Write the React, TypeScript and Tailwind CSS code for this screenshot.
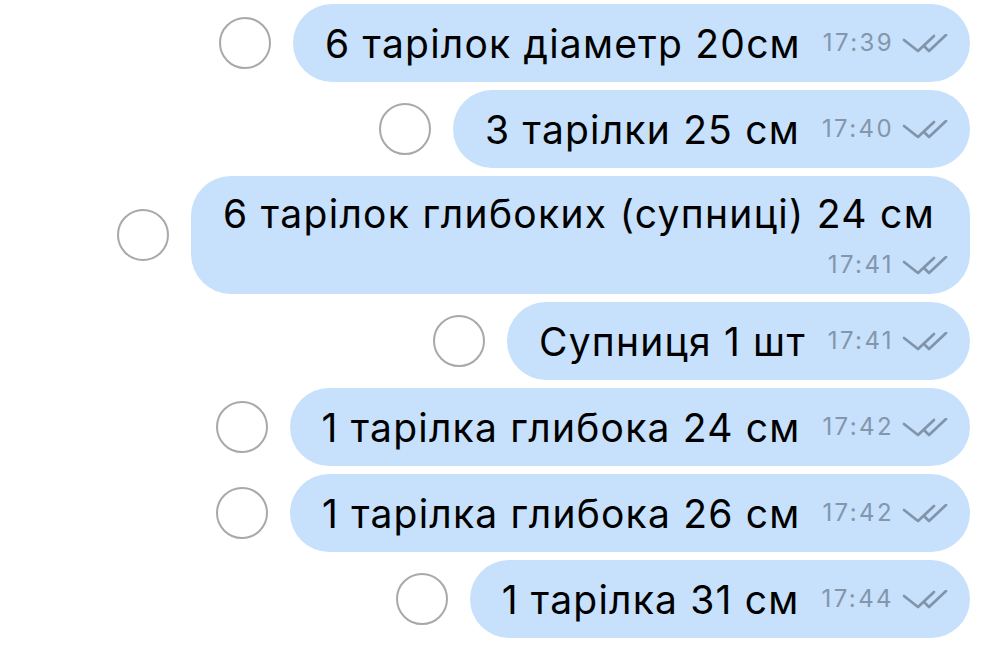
import React from 'react';

type Msg = { text: string; time: string; wrap?: boolean };

const messages: Msg[] = [
  { text: '6 тарілок діаметр 20см', time: '17:39' },
  { text: '3 тарілки 25 см', time: '17:40' },
  { text: '6 тарілок глибоких (супниці) 24 см', time: '17:41', wrap: true },
  { text: 'Супниця 1 шт', time: '17:41' },
  { text: '1 тарілка глибока 24 см', time: '17:42' },
  { text: '1 тарілка глибока 26 см', time: '17:42' },
  { text: '1 тарілка 31 см', time: '17:44' },
];

const Checks: React.FC = () => (
  <svg width="46" height="19" viewBox="0 0 46 19" fill="none" className="shrink-0">
    <path d="M2 6 L16 17 L32 2" stroke="#8194a9" strokeWidth="2.7" strokeLinecap="round" strokeLinejoin="round" />
    <path d="M22 12 L27 17 L44 1" stroke="#8194a9" strokeWidth="2.7" strokeLinecap="round" strokeLinejoin="round" />
  </svg>
);

const Meta: React.FC<{ time: string }> = ({ time }) => (
  <div className="flex items-center gap-2 shrink-0">
    <span className="text-[24px] leading-none text-[#8396ab] tracking-[2.4px]">{time}</span>
    <Checks />
  </div>
);

const Row: React.FC<{ msg: Msg }> = ({ msg }) => (
  <div className="flex items-center justify-end gap-[22px]">
    <div className="w-[52px] h-[52px] rounded-full border-2 border-[#a9a9a9] shrink-0" />
    {msg.wrap ? (
      <div className="bg-[#c7e0fb] rounded-[40px] h-[118px] pl-8 pr-[22px] pt-[14px] flex flex-col">
        <span className="text-[39px] leading-[48px] tracking-[1.3px] text-black whitespace-nowrap mr-[13px]">{msg.text}</span>
        <div className="flex justify-end mt-[15px]">
          <Meta time={msg.time} />
        </div>
      </div>
    ) : (
      <div className="bg-[#c7e0fb] rounded-full h-[78px] pl-8 pr-[22px] flex items-center gap-[22px]">
        <span className="text-[39px] leading-none tracking-[1.2px] text-black whitespace-nowrap">{msg.text}</span>
        <Meta time={msg.time} />
      </div>
    )}
  </div>
);

export default function App() {
  return (
    <div
      className="w-[1000px] h-[646px] overflow-hidden bg-white pt-1 pr-[30px] flex flex-col gap-2"
      style={{ fontFamily: 'Inter, "Noto Sans", sans-serif' }}
    >
      {messages.map((m, i) => (
        <Row key={i} msg={m} />
      ))}
      <div className="flex justify-end pr-[50px] shrink-0">
        <div className="bg-[#c7e0fb] rounded-full h-[78px] w-[257px]" />
      </div>
    </div>
  );
}
